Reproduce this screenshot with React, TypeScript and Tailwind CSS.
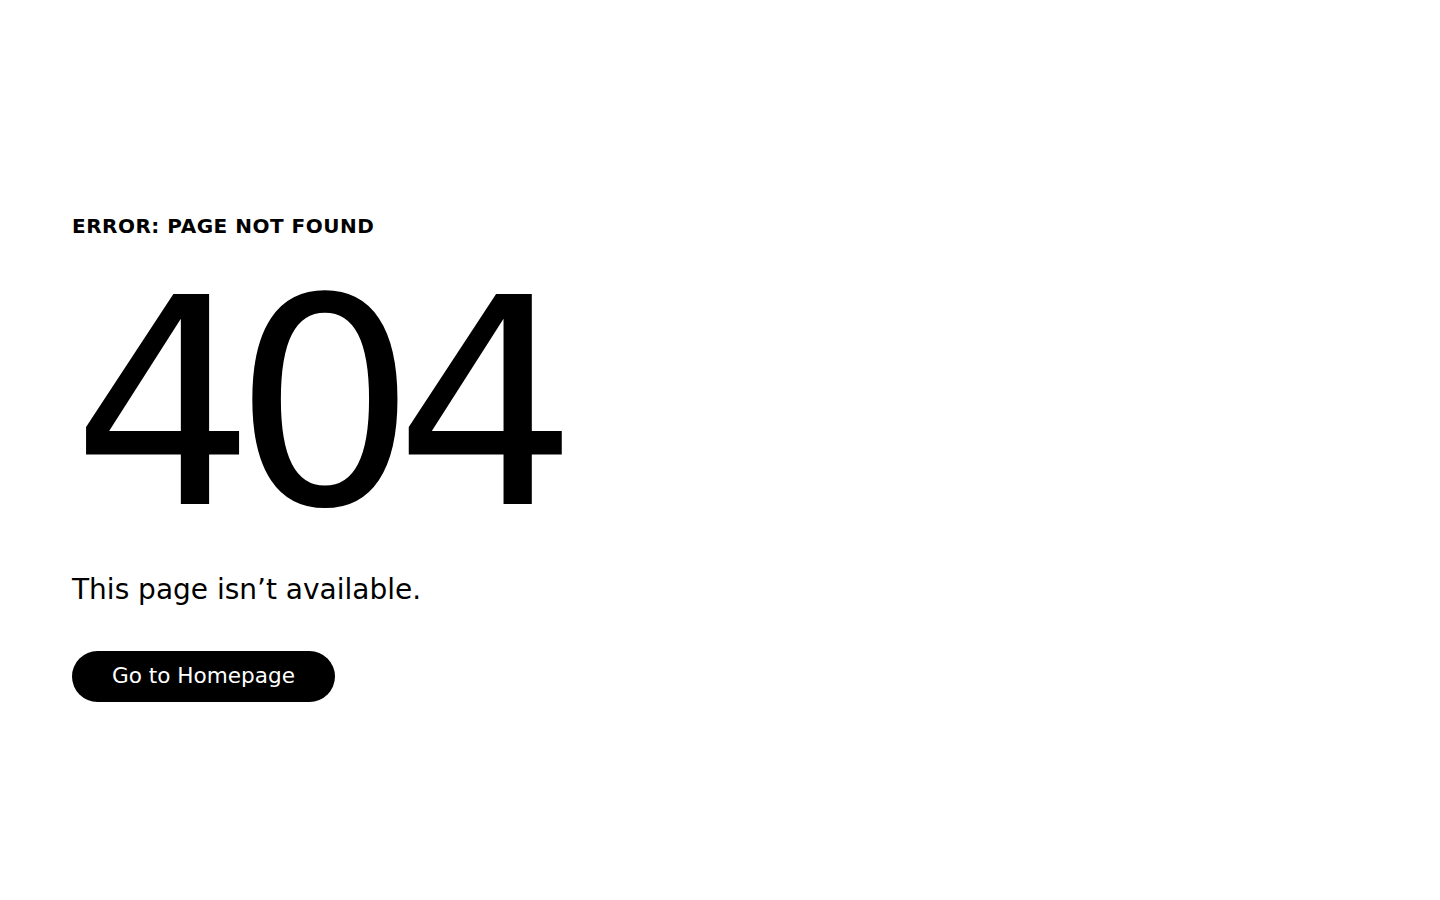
export default function App() {
  return (
    <div
      className="min-h-screen bg-white text-black px-[72px] pt-[215px]"
      style={{ fontFamily: '"DejaVu Sans", sans-serif' }}
    >
      <div className="flex flex-col items-start">
        <h2 className="text-[20px] font-bold tracking-wide leading-[22px]">ERROR: PAGE NOT FOUND</h2>
        <h1 className="text-[288px] leading-none tracking-[-0.076em] mt-[24px]">404</h1>
        <p className="text-[28px] leading-[36px] mt-[23px]">This page isn’t available.</p>
        <a
          href="#"
          className="mt-[43px] inline-flex items-center justify-center h-[51px] px-[40px] rounded-full bg-black text-white text-[21.6px]"
        >
          Go to Homepage
        </a>
      </div>
    </div>
  );
}
